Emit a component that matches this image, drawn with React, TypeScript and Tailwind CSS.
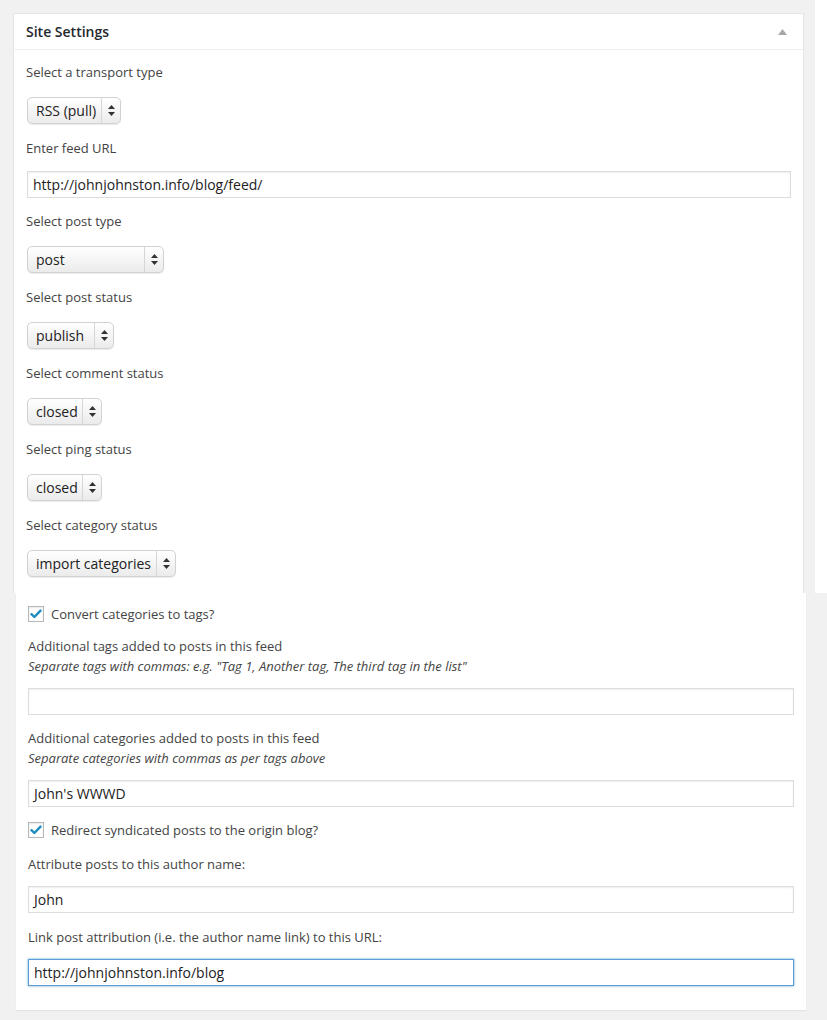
import React from 'react';

const font = { fontFamily: '"Open Sans", "Noto Sans", sans-serif' };

const Arrows = () => (
  <svg width="7" height="11" viewBox="0 0 7 11" className="fill-[#333]">
    <path d="M3.5 0 L7 4 L0 4 Z" />
    <path d="M0 7 L7 7 L3.5 11 Z" />
  </svg>
);

const FakeSelect = ({ value, width }: { value: string; width: string }) => (
  <div
    className={`${width} h-[27px] flex items-stretch rounded-[5px] border border-[#d2d2d2] bg-linear-to-b from-white to-[#ebebeb] shadow-[0_1px_1px_rgba(0,0,0,0.08)] text-[14px] text-[#222]`}
  >
    <span className="flex-1 flex items-center pl-[8px] pb-[1px] whitespace-nowrap">{value}</span>
    <span className="w-[19px] flex items-center justify-center border-l border-[#d6d6d6]">
      <Arrows />
    </span>
  </div>
);

const TextInput = ({ value, focused }: { value?: string; focused?: boolean }) => (
  <div
    className={
      focused
        ? 'h-[27px] w-full flex items-center px-[5px] border border-[#5b9dd9] bg-white text-[14px] text-[#222] shadow-[0_0_2px_rgba(30,140,190,0.8)]'
        : 'h-[27px] w-full flex items-center px-[5px] border border-[#ddd] bg-white text-[14px] text-[#222] shadow-[inset_0_1px_2px_rgba(0,0,0,0.07)]'
    }
  >
    {value}
  </div>
);

const Checkbox = ({ label }: { label: string }) => (
  <div className="flex items-center h-[16px]">
    <span className="w-[16px] h-[16px] border border-[#b4b9be] bg-white shadow-[inset_0_1px_2px_rgba(0,0,0,0.1)] flex items-center justify-center">
      <svg width="12" height="10" viewBox="0 0 12 10">
        <path d="M1.5 5.2 L4.4 8 L10.5 1.6" fill="none" stroke="#1e8cbe" strokeWidth="2.4" strokeLinecap="round" strokeLinejoin="round" />
      </svg>
    </span>
    <span className="ml-[7px] text-[13px] text-[#444] leading-[19px]">{label}</span>
  </div>
);

const SelectField = ({ label, value, width, last }: { label: string; value: string; width: string; last?: boolean }) => (
  <div className={last ? '' : 'mb-[15px]'}>
    <div className="text-[13px] leading-[19px] text-[#444]">{label}</div>
    <div className="mt-[15px] pl-[1px]">
      <FakeSelect value={value} width={width} />
    </div>
  </div>
);

export default function App() {
  return (
    <div style={font} className="w-[827px] min-h-[1020px] bg-[#f1f1f1]">
      {/* upper capture */}
      <div className="flex h-[593px]">
        <div className="w-[815px] bg-[#f1f1f1] pt-[13px] pl-[13px]">
          <div className="w-[791px] h-[580px] bg-white border-x border-t border-[#e5e5e5]">
            <div className="h-[36px] flex items-center justify-between px-[12px] border-b border-[#eeeeee]">
              <span className="text-[14px] font-semibold text-[#23282d]">Site Settings</span>
              <svg width="9" height="6" viewBox="0 0 9 6" className="mr-[4px] mt-[1px]">
                <path d="M4.5 0 L9 6 L0 6 Z" fill="#a8a8a8" />
              </svg>
            </div>
            <div className="px-[12px] pt-[13px]">
              <SelectField label="Select a transport type" value="RSS (pull)" width="w-[94px]" />
              <div className="mb-[14px]">
                <div className="text-[13px] leading-[19px] text-[#444]">Enter feed URL</div>
                <div className="mt-[13px] pl-[1px]">
                  <TextInput value="http://johnjohnston.info/blog/feed/" />
                </div>
              </div>
              <SelectField label="Select post type" value="post" width="w-[137px]" />
              <SelectField label="Select post status" value="publish" width="w-[87px]" />
              <SelectField label="Select comment status" value="closed" width="w-[75px]" />
              <SelectField label="Select ping status" value="closed" width="w-[75px]" />
              <SelectField label="Select category status" value="import categories" width="w-[149px]" last />
            </div>
          </div>
        </div>
        <div className="flex-1 bg-white" />
      </div>

      {/* lower capture */}
      <div className="pl-[16px] pb-[10px]">
        <div className="w-[790px] bg-white shadow-[0_1px_1px_rgba(0,0,0,0.06)] px-[12px] pt-[13px] pb-[24px]">
          <Checkbox label="Convert categories to tags?" />
          <div className="mt-[14px] text-[13px] leading-[20px] text-[#444]">Additional tags added to posts in this feed</div>
          <div className="text-[13px] leading-[20px] italic text-[#444]">
            Separate tags with commas: e.g. "Tag 1, Another tag, The third tag in the list"
          </div>
          <div className="mt-[12px]">
            <TextInput />
          </div>
          <div className="mt-[13px] text-[13px] leading-[20px] text-[#444]">Additional categories added to posts in this feed</div>
          <div className="text-[13px] leading-[20px] italic text-[#444]">Separate categories with commas as per tags above</div>
          <div className="mt-[12px]">
            <TextInput value="John's WWWD" />
          </div>
          <div className="mt-[15px]">
            <Checkbox label="Redirect syndicated posts to the origin blog?" />
          </div>
          <div className="mt-[16px] text-[13px] leading-[20px] text-[#444]">Attribute posts to this author name:</div>
          <div className="mt-[12px]">
            <TextInput value="John" />
          </div>
          <div className="mt-[14px] text-[13px] leading-[20px] text-[#444]">Link post attribution (i.e. the author name link) to this URL:</div>
          <div className="mt-[12px]">
            <TextInput value="http://johnjohnston.info/blog" focused />
          </div>
        </div>
      </div>
    </div>
  );
}
